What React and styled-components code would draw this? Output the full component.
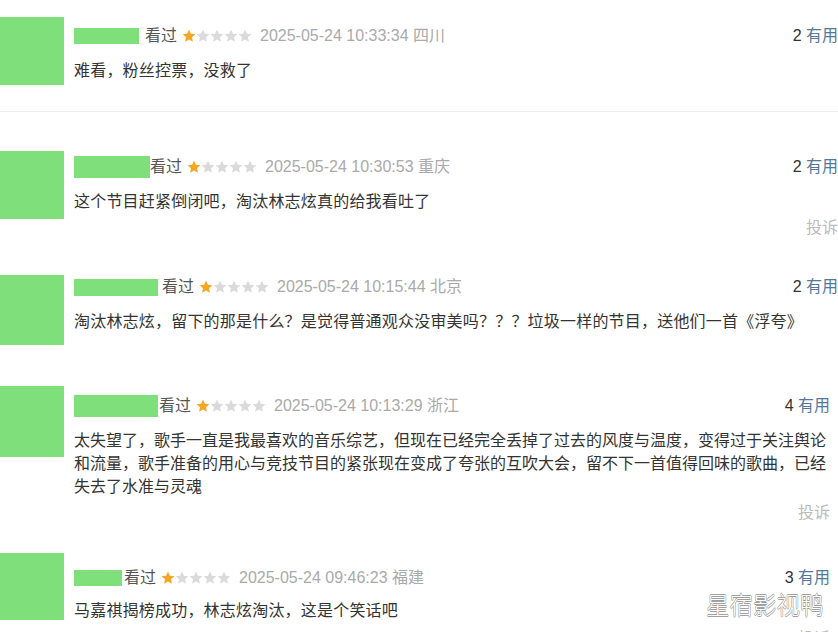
import React from "react";
import styled, { createGlobalStyle } from "styled-components";

const GlobalStyle = createGlobalStyle`
  html, body {
    margin: 0;
    padding: 0;
    background: #fff;
  }
  body {
    font-family: "Liberation Sans", "Noto Sans CJK SC", sans-serif;
  }
`;

const reviews = [
  {
    top: 0,
    avatarH: 68,
    padTop: 7,
    bar: { w: 65, h: 16, gap: 6 },
    date: "2025-05-24 10:33:34 四川",
    votes: 2,
    text: "难看，粉丝控票，没救了",
    textTop: 10,
    right: 0,
    divider: true,
  },
  {
    top: 39,
    avatarH: 68,
    padTop: 4,
    bar: { w: 76, h: 22, gap: 0 },
    date: "2025-05-24 10:30:53 重庆",
    votes: 2,
    text: "这个节目赶紧倒闭吧，淘汰林志炫真的给我看吐了",
    textTop: 10,
    report: 4,
    right: 0,
  },
  {
    top: 39,
    avatarH: 70,
    padTop: 0,
    bar: { w: 84, h: 17, gap: 4 },
    date: "2025-05-24 10:15:44 北京",
    votes: 2,
    text: "淘汰林志炫，留下的那是什么？是觉得普通观众没审美吗？？？垃圾一样的节目，送他们一首《浮夸》",
    textTop: 10,
    right: 0,
  },
  {
    top: 41,
    avatarH: 71,
    padTop: 8,
    bar: { w: 84, h: 22, gap: 1 },
    date: "2025-05-24 10:13:29 浙江",
    votes: 4,
    text: "太失望了，歌手一直是我最喜欢的音乐综艺，但现在已经完全丢掉了过去的风度与温度，变得过于关注舆论和流量，歌手准备的用心与竞技节目的紧张现在变成了夸张的互吹大会，留不下一首值得回味的歌曲，已经失去了水准与灵魂",
    textTop: 10,
    spacing: 0,
    report: 4,
    right: 8,
  },
  {
    top: 32,
    avatarH: 67,
    padTop: 13,
    bar: { w: 48, h: 16, gap: 2 },
    date: "2025-05-24 09:46:23 福建",
    votes: 3,
    text: "马嘉祺揭榜成功，林志炫淘汰，这是个笑话吧",
    textTop: 8,
    report: 6,
    right: 8,
  },
];

function Star({ on }) {
  return (
    <svg width="14" height="14" viewBox="0 0 24 24">
      <polygon
        points="12,1 15.2,8.2 23,9 17.1,14.2 18.7,22 12,18 5.3,22 6.9,14.2 1,9 8.8,8.2"
        fill={on ? "#f5a623" : "#dadada"}
      />
    </svg>
  );
}

function Review({ r }) {
  return (
    <>
      <Card $top={r.top} $right={r.right}>
        <Avatar $h={r.avatarH} />
        <Body $pad={r.padTop}>
          <Header>
            <NameBar $w={r.bar.w} $h={r.bar.h} $gap={r.bar.gap} />
            <Watched>看过</Watched>
            <Stars>
              {[0, 1, 2, 3, 4].map((i) => (
                <Star key={i} on={i === 0} />
              ))}
            </Stars>
            <DateText>{r.date}</DateText>
            <Votes>
              {r.votes} <Useful>有用</Useful>
            </Votes>
          </Header>
          <Content $top={r.textTop} $spacing={r.spacing ?? 0.2}>
            {r.text}
          </Content>
          {r.report !== undefined && <Report $top={r.report}>投诉</Report>}
        </Body>
      </Card>
      {r.divider && <Divider />}
    </>
  );
}

export default function App() {
  return (
    <>
      <GlobalStyle />
      <Page>
        {reviews.map((r, i) => (
          <Review key={i} r={r} />
        ))}
        <Watermark>星宿影视鸭</Watermark>
      </Page>
    </>
  );
}

const Page = styled.div`
  position: relative;
  width: 838px;
  height: 632px;
  overflow: hidden;
  padding-top: 17px;
  box-sizing: border-box;
  background: #fff;
`;

const Card = styled.div`
  display: flex;
  align-items: flex-start;
  gap: 10px;
  margin-top: ${(p) => p.$top}px;
  padding-right: ${(p) => p.$right}px;
`;

const Avatar = styled.div`
  flex: none;
  width: 64px;
  height: ${(p) => p.$h}px;
  background: #7fe07b;
`;

const Body = styled.div`
  flex: 1;
  min-width: 0;
  padding-top: ${(p) => p.$pad}px;
`;

const Header = styled.div`
  display: flex;
  align-items: center;
  height: 24px;
  font-size: 16px;
  line-height: 24px;
  white-space: nowrap;
`;

const NameBar = styled.div`
  flex: none;
  width: ${(p) => p.$w}px;
  height: ${(p) => p.$h}px;
  margin-right: ${(p) => p.$gap}px;
  background: #7fe07b;
`;

const Watched = styled.span`
  color: #555;
  margin-right: 5px;
`;

const Stars = styled.span`
  display: flex;
  margin-right: 8px;
`;

const DateText = styled.span`
  color: #aaa;
`;

const Votes = styled.span`
  margin-left: auto;
  color: #333;
`;

const Useful = styled.span`
  color: #52799b;
`;

const Content = styled.div`
  margin-top: ${(p) => p.$top}px;
  font-family: "Noto Sans CJK SC", sans-serif;
  font-size: 16px;
  line-height: 23px;
  letter-spacing: ${(p) => p.$spacing}px;
  color: #333;
`;

const Report = styled.div`
  margin-top: ${(p) => p.$top}px;
  text-align: right;
  font-family: "Noto Sans CJK SC", sans-serif;
  font-size: 16px;
  line-height: 20px;
  color: #bbb;
`;

const Divider = styled.div`
  height: 1px;
  margin-top: 26px;
  background: #eeeeee;
`;

const Watermark = styled.div`
  position: absolute;
  left: 706px;
  top: 590px;
  font-family: "Noto Sans CJK SC", sans-serif;
  font-weight: 300;
  font-size: 23.5px;
  line-height: 28px;
  color: #fff;
  text-shadow: 0.6px 0 0 #a0a0a0, -0.6px 0 0 #a0a0a0, 0 0.6px 0 #a0a0a0,
    0 -0.6px 0 #a0a0a0;
`;
